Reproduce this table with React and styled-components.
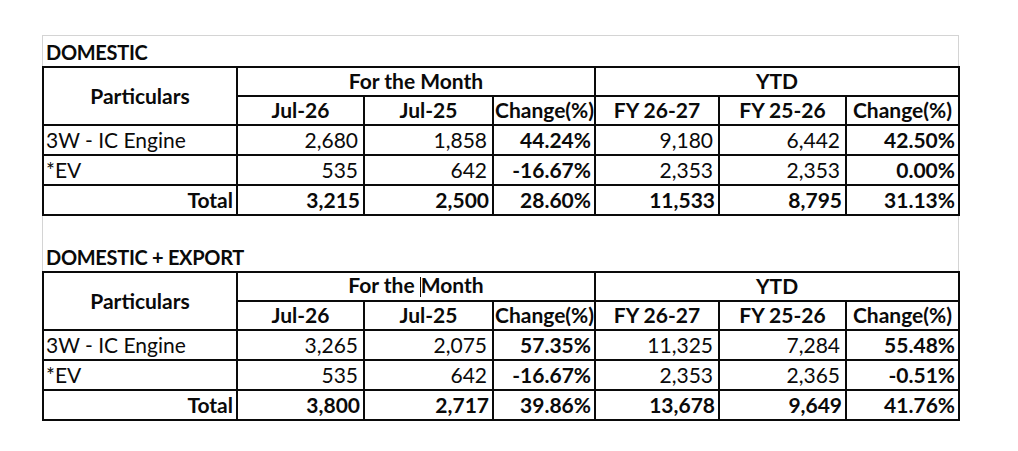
import styled, { createGlobalStyle } from "styled-components"

const Global = createGlobalStyle`
    body {
        margin: 0;
        background: #fff;
        font-family: Lato, "Open Sans", sans-serif;
        color: #0a0a0a;
    }
`

const Page = styled.main`
    padding: 35px 0 0 43px;
`

const Sheet = styled.section`
    width: 915px;
    border: 1px solid #d4d4d4;
    border-bottom: none;
    margin-left: -1px;
`

const SectionTitle = styled.h2`
    margin: 0;
    height: ${(p) => p.$height}px;
    display: flex;
    align-items: flex-end;
    padding: 0 0 2px 3px;
    box-sizing: border-box;
    font-size: 20px;
    font-weight: 700;
    letter-spacing: -0.3px;
`

const Grid = styled.table`
    width: 916px;
    border-collapse: collapse;
    table-layout: fixed;
    font-size: 21px;
    margin-left: -1px;
    background: #fff;

    td, th {
        border: 2px solid #0a0a0a;
        white-space: nowrap;
        line-height: 1;
    }
`

const Row = styled.tr`
    height: ${(p) => p.$h}px;
`

const Head = styled.th`
    font-weight: 700;
    text-align: center;
    padding: ${(p) => (p.$tight ? "0 1px 2px" : "0 4px 2px")};
`

const Cell = styled.td`
    text-align: ${(p) => p.$align || "right"};
    font-weight: ${(p) => (p.$bold ? 700 : 400)};
    padding: ${(p) => (p.$align === "left" ? "0 2px 2px" : p.$bold ? "0 3px 2px" : "0 5px 2px")};
`

const Caret = styled.span`
    display: inline-block;
    width: 0;
    height: 20px;
    border-left: 1.5px solid #0a0a0a;
    vertical-align: -4px;
`

const widths = [194, 127, 129, 102, 124, 127, 113]

const TabelaVendas = ({ dados, caret }) => (
    <Grid>
        <colgroup>
            {widths.map((w, i) => (
                <col key={i} style={{ width: w }} />
            ))}
        </colgroup>
        <thead>
            <Row $h={29}>
                <Head rowSpan={2}>Particulars</Head>
                <Head colSpan={3}>
                    {caret ? (
                        <>
                            For the <Caret />Month
                        </>
                    ) : (
                        "For the Month"
                    )}
                </Head>
                <Head colSpan={3}>YTD</Head>
            </Row>
            <Row $h={29}>
                <Head>Jul-26</Head>
                <Head>Jul-25</Head>
                <Head $tight>Change(%)</Head>
                <Head>FY 26-27</Head>
                <Head>FY 25-26</Head>
                <Head $tight>Change(%)</Head>
            </Row>
        </thead>
        <tbody>
            {dados.map((linha) => (
                <Row $h={30} key={linha[0]}>
                    <Cell $align={linha.total ? "right" : "left"} $bold={linha.total}>
                        {linha[0]}
                    </Cell>
                    <Cell $bold={linha.total}>{linha[1]}</Cell>
                    <Cell $bold={linha.total}>{linha[2]}</Cell>
                    <Cell $bold>{linha[3]}</Cell>
                    <Cell $bold={linha.total}>{linha[4]}</Cell>
                    <Cell $bold={linha.total}>{linha[5]}</Cell>
                    <Cell $bold>{linha[6]}</Cell>
                </Row>
            ))}
        </tbody>
    </Grid>
)

const linha = (valores, total) => Object.assign(valores, { total })

const domestico = [
    linha(["3W - IC Engine", "2,680", "1,858", "44.24%", "9,180", "6,442", "42.50%"]),
    linha(["*EV", "535", "642", "-16.67%", "2,353", "2,353", "0.00%"]),
    linha(["Total", "3,215", "2,500", "28.60%", "11,533", "8,795", "31.13%"], true),
]

const exportacao = [
    linha(["3W - IC Engine", "3,265", "2,075", "57.35%", "11,325", "7,284", "55.48%"]),
    linha(["*EV", "535", "642", "-16.67%", "2,353", "2,365", "-0.51%"]),
    linha(["Total", "3,800", "2,717", "39.86%", "13,678", "9,649", "41.76%"], true),
]

const App = () => (
    <Page>
        <Global />
        <Sheet>
            <SectionTitle $height={30}>DOMESTIC</SectionTitle>
            <TabelaVendas dados={domestico} />
            <SectionTitle $height={55}>DOMESTIC + EXPORT</SectionTitle>
            <TabelaVendas dados={exportacao} caret />
        </Sheet>
    </Page>
)

export default App
